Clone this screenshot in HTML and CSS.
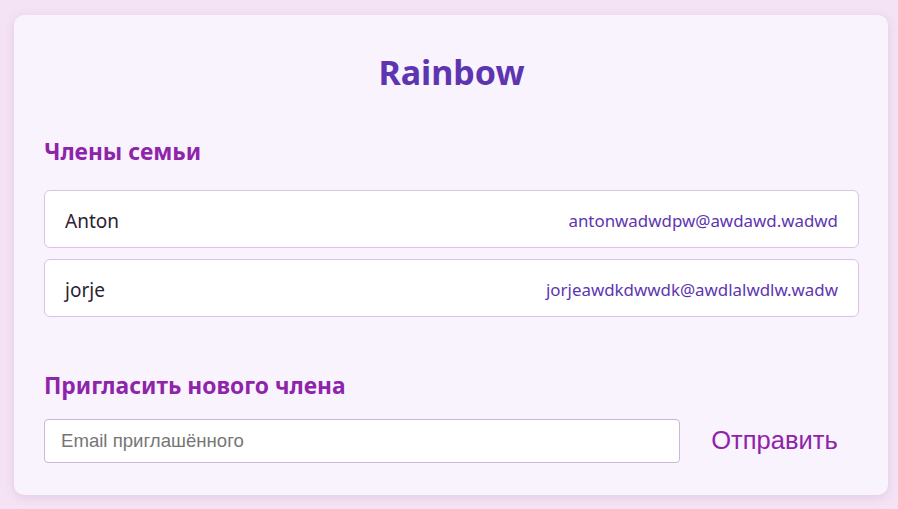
FILE: index.html
```html
<!DOCTYPE html>
<html lang="ru">
<head>
<meta charset="utf-8">
<title>Rainbow</title>
<link rel="stylesheet" href="styles.css">
</head>
<body>
<main class="card">
  <h1 class="title">Rainbow</h1>
  <h2 class="section-title">Члены семьи</h2>
  <ul class="members">
    <li class="member"><span class="member-name">Anton</span><span class="member-email">antonwadwdpw@awdawd.wadwd</span></li>
    <li class="member"><span class="member-name">jorje</span><span class="member-email">jorjeawdkdwwdk@awdlalwdlw.wadw</span></li>
  </ul>
  <h2 class="section-title invite-title">Пригласить нового члена</h2>
  <form class="invite">
    <input class="invite-input" type="email" placeholder="Email приглашённого">
    <button class="invite-btn" type="button">Отправить</button>
  </form>
</main>
</body>
</html>
```

FILE: styles.css
```css
html, body {
  margin: 0;
  padding: 0;
}
body {
  background: #f3e3f4;
  font-family: "Noto Sans", "Open Sans", sans-serif;
  padding: 15px 10px 14px 14px;
  height: 509px;
  box-sizing: border-box;
}
.card {
  background: #f9f3fd;
  border-radius: 10px;
  box-shadow: 0 2px 10px rgba(150, 90, 170, 0.18);
  padding: 0 29px 32px 30px;
  width: 874px;
  box-sizing: border-box;
}
.title {
  margin: 0;
  padding-top: 35px;
  font-size: 34px;
  line-height: 44px;
  font-weight: 700;
  text-align: center;
  color: #5e35b1;
}
.section-title {
  margin: 43px 0 0;
  font-size: 22.8px;
  line-height: 30px;
  font-weight: 700;
  color: #8e24aa;
}
.members {
  list-style: none;
  margin: 23px 0 0;
  padding: 0;
  display: flex;
  flex-direction: column;
  gap: 11px;
}
.member {
  display: flex;
  justify-content: space-between;
  align-items: center;
  height: 58px;
  box-sizing: border-box;
  padding: 3px 20px 0;
  background: #ffffff;
  border: 1px solid #dcc3e6;
  border-radius: 6px;
}
.member-name {
  font-size: 19px;
  color: #2b2233;
}
.member-email {
  font-size: 16.9px;
  color: #5e35b1;
}
.invite-title {
  margin-top: 54px;
}
.invite {
  display: flex;
  align-items: center;
  gap: 10px;
  margin-top: 18px;
}
.invite-input {
  flex: 1;
  height: 44px;
  box-sizing: border-box;
  border: 1px solid #cbb8d6;
  border-radius: 4px;
  background: #ffffff;
  padding: 0 16px;
  font-family: "Liberation Sans", Arial, sans-serif;
  font-size: 18.6px;
  color: #333;
}
.invite-input::placeholder {
  color: #767676;
}
.invite-btn {
  flex: none;
  width: 169px;
  background: none;
  border: none;
  padding: 0 0 2px;
  font-family: "Liberation Sans", Arial, sans-serif;
  font-size: 25.5px;
  color: #8e24aa;
  cursor: pointer;
}
```
